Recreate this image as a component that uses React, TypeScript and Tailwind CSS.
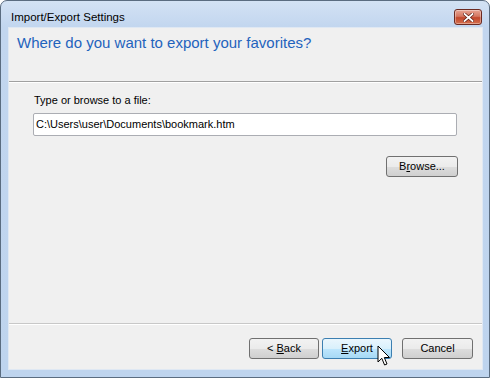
import React from "react";

const btn =
  "h-[21px] rounded-[3px] border text-[11px] text-black flex items-center justify-center";
const normalBtn =
  "border-[#707070] bg-[linear-gradient(to_bottom,#f2f2f2_0%,#ebebeb_50%,#dddddd_51%,#cfcfcf_100%)]";
const hotBtn =
  "border-[#3c7fb1] bg-[linear-gradient(to_bottom,#eaf6fd_0%,#d9f0fc_50%,#bee6fd_51%,#a7d9f5_100%)]";

export default function App() {
  return (
    <div
      className="w-[490px] h-[378px] bg-white"
      style={{ fontFamily: '"Liberation Sans", Arial, sans-serif' }}
    >
      <div className="relative w-[490px] h-[378px] rounded-t-[7px] border border-[#5a6c80] bg-[linear-gradient(to_bottom,#d3e2f4_0px,#c2d6ef_26px,#bed4ee_100%)] flex flex-col">
        {/* Title bar */}
        <div className="h-[26px] flex items-start justify-between pl-[10px] pr-[7px]">
          <span className="mt-[9px] text-[11.5px] leading-[14px] text-black">
            Import/Export Settings
          </span>
          <div className="mt-[8px] w-[28px] h-[16px] rounded-[3px] border border-[#6b2a22] bg-[linear-gradient(to_bottom,#e8a493_0%,#d47761_45%,#c2472c_55%,#d5704f_100%)] flex items-center justify-center shadow-[inset_0_0_0_1px_rgba(255,255,255,0.35)]">
            <svg width="11" height="9" viewBox="0 0 11 9">
              <path
                d="M1.5 1 L9.5 8 M9.5 1 L1.5 8"
                stroke="#5a1a10"
                strokeWidth="3.2"
                strokeLinecap="square"
              />
              <path
                d="M1.5 1 L9.5 8 M9.5 1 L1.5 8"
                stroke="#ffffff"
                strokeWidth="1.8"
                strokeLinecap="square"
              />
            </svg>
          </div>
        </div>

        {/* Client area */}
        <div className="ml-[7px] mr-[6px] h-[343px] bg-[#f0f0f0] border border-[#dfe8f3] flex flex-col">
          {/* Header */}
          <div className="h-[53px] pl-[8px] pt-[6px]">
            <div className="text-[15px] leading-[18px] text-[#1f63bd]">
              Where do you want to export your favorites?
            </div>
          </div>
          <div className="h-[1px] bg-[#a0a0a0]" />
          <div className="h-[1px] bg-[#ffffff]" />

          {/* Body */}
          <div className="flex-1 flex flex-col pl-[24px] pr-[24px]">
            <div className="mt-[10px] ml-[1px] text-[11px] leading-[14px] text-black">
              Type or browse to a file:
            </div>
            <div className="mt-[6px] w-[424px] h-[23px] border border-[#abadb3] bg-white rounded-[2px] flex items-center pl-[2px] text-[11px] text-black">
              C:\Users\user\Documents\bookmark.htm
            </div>
            <div className="mt-[20px] flex justify-end">
              <div className={`${btn} ${normalBtn} w-[72px]`}>
                <span>
                  B<span className="underline">r</span>owse...
                </span>
              </div>
            </div>
          </div>

          {/* Footer */}
          <div className="h-[1px] bg-[#c8c8c8]" />
          <div className="h-[1px] bg-[#ffffff]" />
          <div className="h-[44px] flex items-start justify-end pr-[9px] pt-[13px]">
            <div className={`${btn} ${normalBtn} w-[70px]`}>
              <span>
                &lt; <span className="underline">B</span>ack
              </span>
            </div>
            <div className={`${btn} ${hotBtn} w-[70px] ml-[3px]`}>
              <span>
                <span className="underline">E</span>xport
              </span>
            </div>
            <div className={`${btn} ${normalBtn} w-[71px] ml-[10px]`}>
              <span>Cancel</span>
            </div>
          </div>
        </div>

        {/* Mouse cursor */}
        <svg
          className="absolute left-[376px] top-[344px]"
          width="14"
          height="22"
          viewBox="0 0 14 22"
        >
          <path
            d="M1 1 L1 17 L4.8 13.3 L7.6 20 L10 19 L7.3 12.5 L12.5 12.5 Z"
            fill="#ffffff"
            stroke="#000000"
            strokeWidth="1"
            strokeLinejoin="miter"
          />
        </svg>
      </div>
    </div>
  );
}
